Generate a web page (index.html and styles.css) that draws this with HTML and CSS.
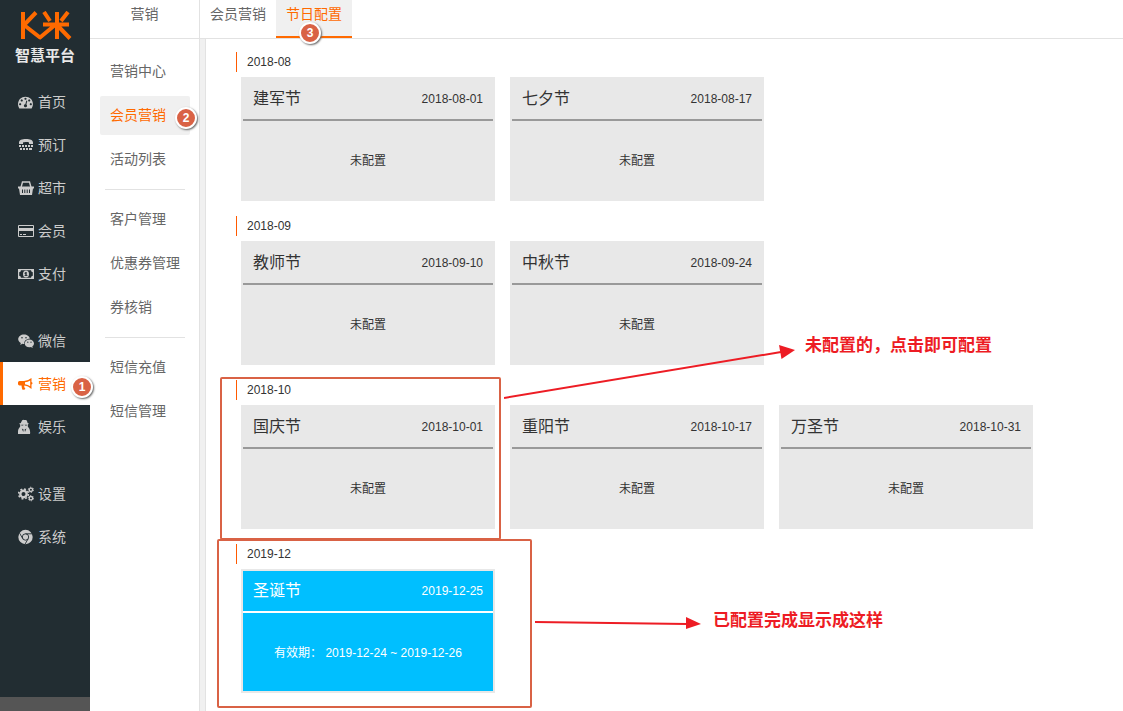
FILE: index.html
```html
<!DOCTYPE html>
<html lang="zh-CN">
<head>
<meta charset="utf-8">
<meta name="viewport" content="width=device-width, initial-scale=1">
<title>节日配置</title>
<link rel="stylesheet" href="styles.css">
</head>
<body>
<div class="app">
  <aside class="rail">
    <div class="brand">
      <svg class="brand-mark" viewBox="0 0 54 30" aria-hidden="true">
        <g fill="none" stroke="#ff6a00" stroke-width="4" stroke-linejoin="round">
          <path d="M5 1v27M18 1.500 6 14l16 12.500L37 14M26 1l6 9M50 1l-7 9M25 13.500h26M39 1v27M40 15l12 12.500"/>
        </g>
      </svg>
      <span class="brand-name">智慧平台</span>
    </div>
    <nav class="rail-nav">
      <div class="rail-group">
        <a class="rail-link" href="#">
          <svg class="icon" viewBox="0 0 1920 1792" aria-hidden="true"><path d="M384 1152q0-53-37.500-90.500t-90.500-37.500-90.500 37.500-37.500 90.500 37.500 90.500 90.500 37.500 90.500-37.500 37.500-90.500zm192-448q0-53-37.500-90.500t-90.500-37.500-90.500 37.500-37.500 90.500 37.500 90.500 90.500 37.500 90.500-37.500 37.500-90.500zm428 481l101-382q6-26-7.500-48.500t-38.500-29.500-48 6.500-30 39.500l-101 382q-60 5-107 43.500t-63 98.500q-20 77 20 146t117 89 146-20 89-117q16-60-6-117t-72-91zm660-33q0-53-37.500-90.500t-90.500-37.500-90.500 37.500-37.500 90.500 37.500 90.500 90.500 37.500 90.500-37.500 37.500-90.500zm-640-640q0-53-37.500-90.500t-90.500-37.500-90.500 37.500-37.500 90.500 37.500 90.500 90.500 37.500 90.500-37.500 37.500-90.500zm448 192q0-53-37.500-90.500t-90.500-37.500-90.500 37.500-37.500 90.500 37.500 90.500 90.500 37.500 90.500-37.500 37.500-90.500zm320 448q0 261-141 483-19 29-54 29h-1402q-35 0-54-29-141-221-141-483 0-182 71-348t191-286 286-191 348-71 348 71 286 191 191 286 71 348z"/></svg>
          首页</a>
        <a class="rail-link" href="#">
          <svg class="icon" viewBox="0 0 16 16" aria-hidden="true"><path d="M1 7V5.500C1 3 4 2 8 2s7 1 7 3.500V7h-4V5.500C10 4.800 6 4.800 5 5.500V7z"/><path d="M1 8h2v2H1zM4 8h2v2H4zM7 8h2v2H7zM10 8h2v2h-2zM13 8h2v2h-2zM2 11h2v2H2zM5 11h2v2H5zM8 11h2v2H8zM11 11h3v2h-3z"/></svg>
          预订</a>
        <a class="rail-link" href="#">
          <svg class="icon" viewBox="0 0 16 16" aria-hidden="true"><path fill="none" stroke="currentColor" stroke-width="1.400" d="M3 7.500 4.500 2h7L13 7.500"/><path fill-rule="evenodd" d="M0 6.500h16v2h-1L14 15H2L1 8.500H0zM4 9.500V13h1V9.500zM6.300 9.500V13h1V9.500zM8.700 9.500V13h1V9.500zM11 9.500V13h1V9.500z"/></svg>
          超市</a>
        <a class="rail-link" href="#">
          <svg class="icon" viewBox="0 0 16 16" aria-hidden="true"><path fill-rule="evenodd" d="M1 2h14q1 0 1 1v10q0 1-1 1H1q-1 0-1-1V3q0-1 1-1zm0 1v2h14V3zM1 7.500V13h14V7.500zM2 11h2v1H2zM5 11h3v1H5z"/><path d="M1 5h14v3H1z"/></svg>
          会员</a>
        <a class="rail-link" href="#">
          <svg class="icon" viewBox="0 0 16 16" aria-hidden="true"><path fill-rule="evenodd" d="M0 3h16v10H0zM3 4.200Q2.800 6 1.200 6.200v3.600Q2.800 10 3 11.800h10q.2-1.800 1.800-2V6.200Q13.200 6 13 4.200z"/><path fill-rule="evenodd" d="M8 4.500a3 3.500 0 0 1 0 7 3 3.500 0 0 1 0-7zM7.600 6 6.500 7v.8h.8V9.200h-.8v.8h3v-.8h-.8V6z"/></svg>
          支付</a>
      </div>
      <div class="rail-group">
        <a class="rail-link" href="#">
          <svg class="icon" viewBox="0 0 16 16" aria-hidden="true"><path fill-rule="evenodd" d="M6 1.500c3 0 5.500 1.800 5.800 4.200-3.500 0-6 2.300-5.500 5.200-.7 0-1.300 0-1.900-.2L2.300 12l.5-2C1.200 9 .2 7.800.2 6.300.2 3.600 2.800 1.500 6 1.500zM4 4a.8.8 0 1 0 0 1.600A.8.800 0 0 0 4 4zm4 0a.8.8 0 1 0 0 1.600A.8.800 0 0 0 8 4z"/><path fill-rule="evenodd" d="M11.300 6.500c2.700 0 4.700 1.800 4.700 4 0 1.200-.7 2.200-1.700 3l.4 1.500-1.800-.9c-3.200.8-6.200-1-6.200-3.600 0-2.200 2-4 4.600-4zM9.800 8.500a.6.600 0 1 0 0 1.300.6.600 0 0 0 0-1.300zm3.200 0a.6.600 0 1 0 0 1.300.6.600 0 0 0 0-1.300z"/></svg>
          微信</a>
        <a class="rail-link rail-link-active" href="#" aria-current="page">
          <svg class="icon" viewBox="0 0 16 16" aria-hidden="true"><path fill-rule="evenodd" d="M13.500 2v4q1 .2 1 1.200t-1 1.200V13q-3.500-3.300-7-3.500-.8.600 0 1.500-.3.800.9 1.800-.2 1.200-2.900 1-.9-2.200-1-4.300H1.500Q0 9.300 0 8V6.500q0-1.300 1.500-1.500H6Q10 4.800 13.500 2zm-1.300 2.400Q10 6 7 6.200v2.100q3 .3 5.200 1.900z"/></svg>
          营销<span class="badge badge-rail">1</span></a>
        <a class="rail-link" href="#">
          <svg class="icon" viewBox="0 0 16 16" aria-hidden="true"><path fill-rule="evenodd" d="M4 1.500Q5 .5 6 1h1q1.500-.5 2 1l.6 2 1.400.7-1.200.8v2l1.700 2.500q1 3 .5 5H0q-.5-2 .5-5l1.700-2.500v-2L1 4.700l1.800-.7zM3.300 5.800v.8h1.800l.5-.8zM6.600 5.800l.5.800h1.800v-.8zM3.800 9.500l1.400 3.500.4-2.500zM8.400 9.500l-1.800 1 .4 2.500z"/></svg>
          娱乐</a>
      </div>
      <div class="rail-group">
        <a class="rail-link" href="#">
          <svg class="icon" viewBox="0 0 16 16" aria-hidden="true"><g fill="none" stroke="currentColor"><circle cx="5.500" cy="8" r="3.200" stroke-width="2.400"/><circle cx="5.500" cy="8" r="4.900" stroke-width="1.600" stroke-dasharray="1.920 1.928"/><circle cx="12.900" cy="3.800" r="1.700" stroke-width="1.300"/><circle cx="12.900" cy="3.800" r="2.600" stroke-width="1" stroke-dasharray="1.360 1.362"/><circle cx="12.900" cy="12.200" r="1.700" stroke-width="1.300"/><circle cx="12.900" cy="12.200" r="2.600" stroke-width="1" stroke-dasharray="1.360 1.362"/></g></svg>
          设置</a>
        <a class="rail-link" href="#">
          <svg class="icon" viewBox="0 0 16 16" aria-hidden="true"><circle cx="7.500" cy="8" r="7.200"/><g fill="none" stroke="#222d32" stroke-width=".9"><circle cx="7.500" cy="8" r="3.200"/><path d="M7.500 4.800h6.600M4.800 9.700 1.600 4.200M10.200 9.700 7 15.200"/></g></svg>
          系统</a>
      </div>
    </nav>
    <div class="rail-foot"></div>
  </aside>

  <aside class="menu">
    <h2 class="menu-title">营销</h2>
    <nav class="menu-nav">
      <div class="menu-group">
        <a class="menu-link" href="#">营销中心</a>
        <a class="menu-link menu-link-active" href="#">会员营销<span class="badge badge-menu">2</span></a>
        <a class="menu-link" href="#">活动列表</a>
      </div>
      <div class="menu-group">
        <a class="menu-link" href="#">客户管理</a>
        <a class="menu-link" href="#">优惠券管理</a>
        <a class="menu-link" href="#">券核销</a>
      </div>
      <div class="menu-group">
        <a class="menu-link" href="#">短信充值</a>
        <a class="menu-link" href="#">短信管理</a>
      </div>
    </nav>
  </aside>

  <main class="main">
    <nav class="tabs">
      <a class="tab" href="#">会员营销</a>
      <a class="tab tab-active" href="#" aria-current="page">节日配置<span class="badge badge-tab">3</span></a>
    </nav>
    <div class="months">
      <section class="month">
        <h3 class="month-title">2018-08</h3>
        <div class="cards">
          <button class="card" type="button"><span class="card-head"><span class="card-name">建军节</span><span>2018-08-01</span></span><span class="card-body">未配置</span></button>
          <button class="card" type="button"><span class="card-head"><span class="card-name">七夕节</span><span>2018-08-17</span></span><span class="card-body">未配置</span></button>
        </div>
      </section>
      <section class="month">
        <h3 class="month-title">2018-09</h3>
        <div class="cards">
          <button class="card" type="button"><span class="card-head"><span class="card-name">教师节</span><span>2018-09-10</span></span><span class="card-body">未配置</span></button>
          <button class="card" type="button"><span class="card-head"><span class="card-name">中秋节</span><span>2018-09-24</span></span><span class="card-body">未配置</span></button>
        </div>
      </section>
      <section class="month">
        <h3 class="month-title">2018-10</h3>
        <div class="cards">
          <button class="card" type="button"><span class="card-head"><span class="card-name">国庆节</span><span>2018-10-01</span></span><span class="card-body">未配置</span></button>
          <button class="card" type="button"><span class="card-head"><span class="card-name">重阳节</span><span>2018-10-17</span></span><span class="card-body">未配置</span></button>
          <button class="card" type="button"><span class="card-head"><span class="card-name">万圣节</span><span>2018-10-31</span></span><span class="card-body">未配置</span></button>
        </div>
        <div class="frame frame-pending"></div>
      </section>
      <section class="month">
        <h3 class="month-title">2019-12</h3>
        <div class="cards">
          <button class="card card-set" type="button"><span class="card-head"><span class="card-name">圣诞节</span><span>2019-12-25</span></span><span class="card-body">有效期： 2019-12-24 ~ 2019-12-26</span></button>
        </div>
        <div class="frame frame-set"></div>
      </section>
    </div>
  </main>

  <svg class="arrow arrow-pending" viewBox="0 0 294 58" aria-hidden="true"><path class="arrow-line" d="M0 53 277 7"/><path class="arrow-tip" d="M275 0 291 5 277.500 14z"/></svg>
  <p class="note note-pending">未配置的，点击即可配置</p>
  <svg class="arrow arrow-set" viewBox="0 0 168 14" aria-hidden="true"><path class="arrow-line" d="M0 6 152 8"/><path class="arrow-tip" d="M151 1 166 8 151 13z"/></svg>
  <p class="note note-set">已配置完成显示成这样</p>
</div>
</body>
</html>
```
FILE: styles.css
```css
* { box-sizing: border-box; }

body {
  margin: 0;
  background: #fff;
  color: #333;
  font: 12px/20px "Liberation Sans", "Noto Sans CJK SC", sans-serif;
}

a { color: inherit; text-decoration: none; }
h2, h3, p { margin: 0; font-weight: 400; }

.app {
  position: relative;
  display: flex;
  min-height: 100vh;
}

/* Dark navigation rail */
.rail {
  display: flex;
  flex-direction: column;
  flex: 0 0 90px;
  background: #222d32;
  color: #ccc;
}
.brand {
  display: flex;
  flex-direction: column;
  align-items: center;
  gap: 5px;
  height: 80px;
  padding-top: 11px;
}
.brand-mark { width: 54px; height: 30px; }
.brand-name { color: #e8e8e8; font-size: 15px; font-weight: 700; line-height: 20px; }
.rail-nav { display: flex; flex-direction: column; gap: 24px; }
.rail-link {
  position: relative;
  display: flex;
  align-items: center;
  gap: 4px;
  height: 43px;
  padding-left: 15px;
  border-left: 3px solid transparent;
  font-size: 14px;
}
.rail-link-active { border-color: #ff6a00; background: #fff; color: #ff6a00; }
.icon { width: 16px; height: 16px; fill: currentColor; }
.rail-foot { height: 14px; margin-top: auto; background: #555; }

/* Secondary menu */
.menu {
  flex: 0 0 110px;
  border-right: 1px solid #e2e2e2;
  color: #666;
  font-size: 14px;
}
.menu-title {
  height: 39px;
  border-bottom: 1px solid #e2e2e2;
  font-size: 14px;
  line-height: 28px;
  text-align: center;
}
.menu-nav { padding: 13px 9px 0 10px; }
.menu-group { display: flex; flex-direction: column; gap: 5px; }
.menu-group + .menu-group::before {
  content: "";
  height: 1px;
  margin: 10px 5px 5px;
  background: #e2e2e2;
}
.menu-link {
  position: relative;
  height: 39px;
  padding-left: 10px;
  border-radius: 2px;
  line-height: 39px;
}
.menu-link-active { background: #f0f0f0; color: #ff6a00; }

/* Content */
.main { flex: 1; display: flex; flex-direction: column; min-width: 0; }
.tabs {
  display: flex;
  height: 39px;
  border-bottom: 1px solid #e2e2e2;
  color: #666;
  font-size: 14px;
  line-height: 28px;
}
.tab { position: relative; padding: 0 10px; }
.tab-active { border-bottom: 2px solid #ff6a00; background: #f0f0f0; color: #ff6a00; }
.months {
  flex: 1;
  padding: 13px 20px 0 31px;
  border-left: 5px solid #f0f0f0;
  box-shadow: inset 1px 0 #e2e2e2;
}
.month { position: relative; padding-bottom: 15px; }
.month-title {
  margin-bottom: 5px;
  padding-left: 10px;
  border-left: 1px solid #ff5a00;
  font-size: 12px;
}
.cards { display: flex; flex-wrap: wrap; gap: 15px; padding-left: 5px; }
.card {
  width: 254px;
  padding: 0;
  border: 2px solid #e8e8e8;
  background: #e8e8e8;
  color: #333;
  font: inherit;
  cursor: pointer;
}
.card-head {
  display: flex;
  align-items: center;
  justify-content: space-between;
  height: 42px;
  padding: 0 10px;
  border-bottom: 2px solid #999;
}
.card-name { font-size: 16px; }
.card-body { display: block; padding-top: 2px; line-height: 76px; }
.card-set { background: #00bfff; color: #fff; }
.card-set .card-head { border-color: #fff; }

/* Guide overlay */
.badge {
  position: absolute;
  width: 22px;
  height: 22px;
  border: 2px solid #fff;
  border-radius: 50%;
  background: #d96245;
  box-shadow: 1px 1px 2px 0 #666;
  color: #fff;
  font-size: 12px;
  font-weight: 700;
  line-height: 18px;
  text-align: center;
  z-index: 1;
}
.badge-rail { top: 14px; right: -3px; }
.badge-menu { top: 11px; right: -7px; }
.badge-tab { top: 22px; left: 23px; }
.frame { position: absolute; border: 2px solid #d96245; border-radius: 2px; pointer-events: none; }
.frame-pending { top: -3px; left: -16px; width: 281px; height: 163px; }
.frame-set { top: -5px; left: -19px; width: 315px; height: 169px; }
.arrow { position: absolute; }
.arrow-line { fill: none; stroke: #ed1c24; stroke-width: 2; }
.arrow-tip { fill: #ed1c24; }
.arrow-pending { top: 345px; left: 504px; width: 294px; height: 58px; }
.arrow-set { top: 616px; left: 535px; width: 168px; height: 14px; }
.note {
  position: absolute;
  color: #ed1c24;
  font-size: 17px;
  font-weight: 700;
  line-height: 24px;
  white-space: nowrap;
}
.note-pending { top: 334px; left: 805px; }
.note-set { top: 609px; left: 713px; }
```
